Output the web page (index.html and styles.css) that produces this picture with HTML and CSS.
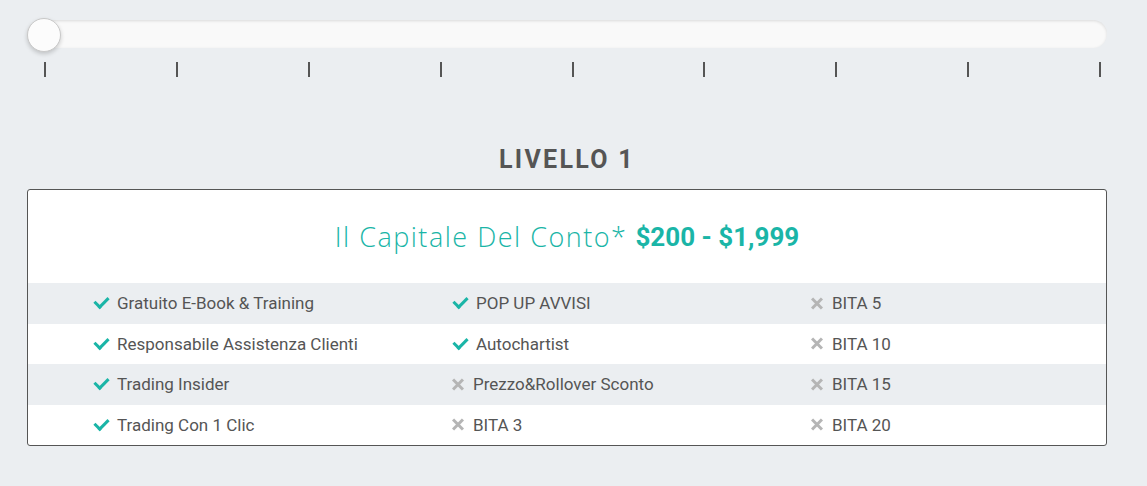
FILE: index.html
```html
<!DOCTYPE html>
<html lang="it">
<head>
<meta charset="utf-8">
<title>Livello 1</title>
<link rel="stylesheet" href="styles.css">
</head>
<body>
<div class="page">
  <div class="slider">
    <div class="track"><div class="thumb"></div></div>
    <div class="ticks">
      <span class="tick"></span><span class="tick"></span><span class="tick"></span>
      <span class="tick"></span><span class="tick"></span><span class="tick"></span>
      <span class="tick"></span><span class="tick"></span><span class="tick"></span>
    </div>
  </div>
  <h2 class="level">LIVELLO 1</h2>
  <div class="card">
    <div class="card-title"><span class="lbl">Il Capitale Del Conto*</span> <strong>$200 - $1,999</strong></div>
    <div class="rows">
      <div class="row">
        <div class="cell yes"><span class="ic"></span>Gratuito E-Book &amp; Training</div>
        <div class="cell yes"><span class="ic"></span>POP UP AVVISI</div>
        <div class="cell no"><span class="ic"></span>BITA 5</div>
      </div>
      <div class="row">
        <div class="cell yes"><span class="ic"></span>Responsabile Assistenza Clienti</div>
        <div class="cell yes"><span class="ic"></span>Autochartist</div>
        <div class="cell no"><span class="ic"></span>BITA 10</div>
      </div>
      <div class="row">
        <div class="cell yes"><span class="ic"></span>Trading Insider</div>
        <div class="cell no"><span class="ic"></span>Prezzo&amp;Rollover Sconto</div>
        <div class="cell no"><span class="ic"></span>BITA 15</div>
      </div>
      <div class="row">
        <div class="cell yes"><span class="ic"></span>Trading Con 1 Clic</div>
        <div class="cell no"><span class="ic"></span>BITA 3</div>
        <div class="cell no"><span class="ic"></span>BITA 20</div>
      </div>
    </div>
  </div>
</div>
</body>
</html>
```

FILE: styles.css
```css
html, body {
  margin: 0;
  padding: 0;
  background: #ebeef1;
  font-family: Roboto, "Liberation Sans", sans-serif;
  color: #555;
}
.page {
  padding: 20px 40px 0 27px;
}
.slider {
  width: 1080px;
}
.track {
  position: relative;
  height: 28px;
  border-radius: 14px;
  background: #f9f9f9;
  box-shadow: inset 0 1px 3px rgba(0,0,0,0.12);
}
.thumb {
  position: absolute;
  left: 0;
  top: -2px;
  width: 32px;
  height: 32px;
  border-radius: 50%;
  background: #fcfcfc;
  border: 1px solid #c9c9c9;
  box-shadow: 0 2px 4px rgba(0,0,0,0.18);
}
.ticks {
  display: flex;
  justify-content: space-between;
  padding: 14px 6px 0 17px;
}
.tick {
  width: 2px;
  height: 15px;
  background: #555;
}
.level {
  margin: 68px 0 0;
  text-align: center;
  width: 1080px;
  font-size: 25px;
  font-weight: 700;
  letter-spacing: 2.3px;
  line-height: 30px;
  color: #555;
}
.card {
  margin-top: 14px;
  width: 1078px;
  background: #fff;
  border: 1px solid #555;
  border-radius: 3px;
  overflow: hidden;
}
.card-title {
  height: 93px;
  display: flex;
  align-items: center;
  justify-content: center;
  gap: 8px;
  color: #1ab5a7;
  font-size: 27px;
}
.card-title .lbl {
  font-family: "Open Sans", sans-serif;
  font-weight: 300;
  font-size: 27px;
  letter-spacing: 1.5px;
}
.card-title strong {
  font-family: Roboto, sans-serif;
  font-weight: 700;
  font-size: 26px;
}
.row {
  display: grid;
  grid-template-columns: 359px 359px 1fr;
  height: 40.5px;
  align-items: center;
}
.row:nth-child(odd) {
  background: #ebeef1;
}
.cell {
  display: flex;
  align-items: center;
  padding-left: 64px;
  font-size: 17px;
  color: #555;
}
.ic {
  display: inline-block;
  width: 25px;
  height: 16px;
  position: relative;
}
.yes .ic::before {
  content: "";
  position: absolute;
  width: 6px;
  height: 11px;
  border-right: 3px solid #1ab5a7;
  border-bottom: 3px solid #1ab5a7;
  transform: rotate(45deg);
  transform-origin: center;
  left: 5px;
  top: -1px;
}
.no .ic::before, .no .ic::after {
  content: "";
  position: absolute;
  left: 0px;
  top: 6.5px;
  width: 14px;
  height: 3px;
  background: #b5b5b5;
  transform: rotate(45deg);
}
.no .ic::after {
  transform: rotate(-45deg);
}
.no .ic { width: 22px; }
```
